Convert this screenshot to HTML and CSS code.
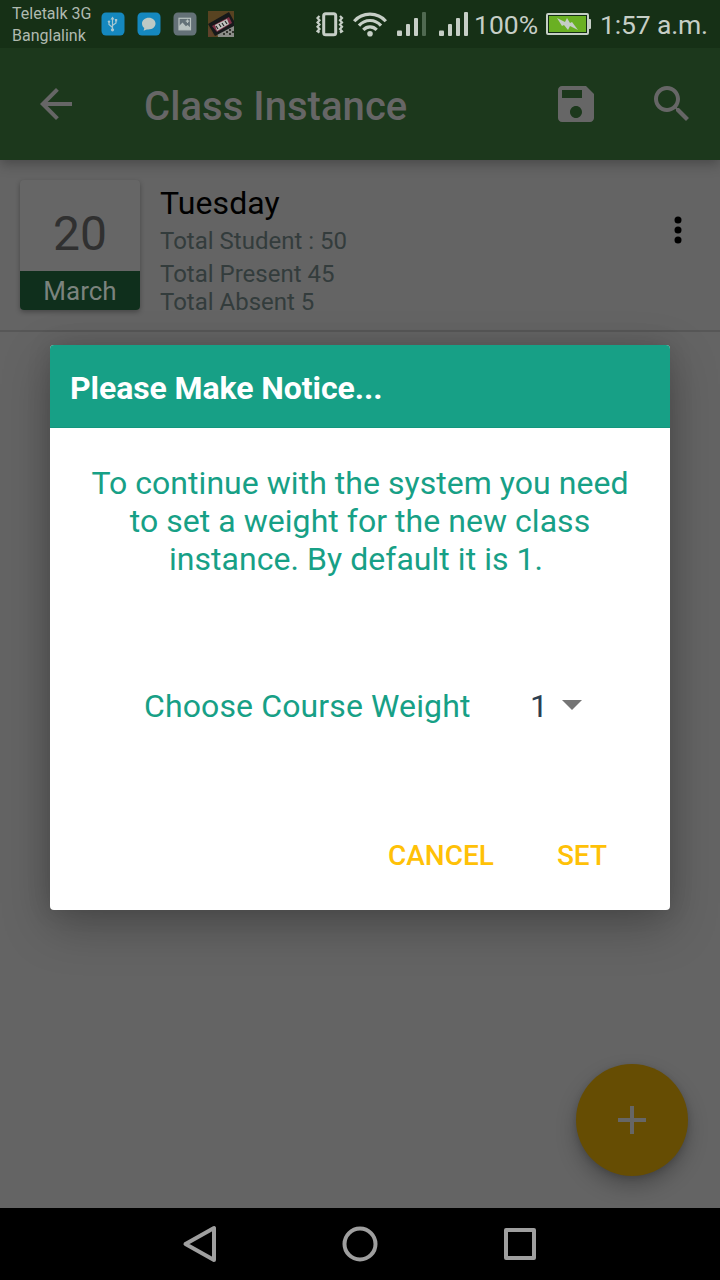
FILE: index.html
```html
<!DOCTYPE html>
<html lang="en">
<head>
<meta charset="utf-8">
<title>Class Instance</title>
<link rel="stylesheet" href="styles.css">
</head>
<body>
<div class="screen">
  <header class="top">
    <div class="status">
      <div class="carriers"><span>Teletalk 3G</span><span>Banglalink</span></div>
      <div class="notifications">
        <svg class="note" width="24" height="24" viewBox="0 0 24 24"><rect x=".5" y=".5" width="23" height="23" rx="4.5" fill="#1588bf"/><g fill="none" stroke="#a9c8d2" stroke-width="1.2"><path d="M11.5 18V6.5M11.5 15.5L8 12.5V10M11.5 13.5L15 11V8.5"/></g><path d="M11.5 4.5l2 3h-4z" fill="#a9c8d2"/><g fill="#a9c8d2"><circle cx="11.5" cy="17.8" r="1.6"/><circle cx="8" cy="9.6" r="1.2"/><path d="M14 7h2.2v2.4H14z"/></g></svg>
        <svg class="note" width="24" height="24" viewBox="0 0 24 24"><rect x=".5" y=".5" width="23" height="23" rx="4.5" fill="#1588bf"/><path d="M11.800 5.800C8 5.800 5 8.200 5 11.600c0 2 1 3.600 2.300 4.500l-.7 2.600 3.200-1.300c5.500.6 8.700-2.200 8.700-5.800C18.500 8.200 15.500 5.800 11.800 5.800z" fill="#bdc9c5"/></svg>
        <svg class="note" width="24" height="24" viewBox="0 0 24 24"><rect x=".5" y=".5" width="23" height="23" rx="4.500" fill="#647177"/><rect x="6" y="6.300" width="11.500" height="11.500" fill="none" stroke="#b9c2c0" stroke-width="1.200"/><path d="M6 14l3.500-3.600 3.400 3.800 1.700-1.200 3 2.800v2H6z" fill="#b9c2c0"/><path d="M14.500 7.500v3.400M12.800 9.200h3.400" stroke="#b9c2c0" stroke-width="1.200"/></svg>
        <svg width="26" height="26" viewBox="0 0 26 26"><path fill="#584321" d="M0 0h26v26H0z"/><path fill="#8b8d88" d="M9 21l17-9v14H10z"/><path fill="#17191b" d="M0 13L21 1l5 9v5L7 25z"/><path fill="#7e3045" d="M4 15l17-9 3 6-15 9z"/><path fill="#c0c1bd" d="M7 14l12-6 2 5-12 7z"/><path d="M8 15l2 3M11 13l2 3M14 12l2 3M17 10l2 3" stroke="#222" stroke-width="1.200"/><path fill="#17191b" d="M3 12l16-9 2 2-16 9z"/><path d="M15 22h2v2h-2zM18 20h2v2h-2zM21 22h2v2h-2zM21 18h2v2h-2zM24 20h2v2h-2z" fill="#33352f"/><path fill="#60412b" d="M0 16l6 9-6 1z"/></svg>
      </div>
      <div class="system">
        <svg class="vibrate" width="28" height="26" viewBox="0 0 28 26"><rect x="7.700" y="1.700" width="12" height="21" rx="2" fill="none" stroke="#c6cec6" stroke-width="3"/><path d="M3.500 4L1.500 6l2 2.200-2 2.200 2 2.200-2 2.200 2 2.200-2 2.200 2 1.300M24 4l2 2-2 2.200 2 2.200-2 2.200 2 2.200-2 2.200 2 2.200-2 1.300" fill="none" stroke="#c6cec6" stroke-width="2.200"/></svg>
        <svg class="wifi" width="34" height="26" viewBox="0 0 34 26"><g fill="none" stroke="#c6cec6" stroke-width="3.200"><path d="M1.200 9.200C9.500-.2 24.500-.2 32.800 9.200"/><path d="M6 13.600c6-6.800 16-6.800 22 0"/><path d="M10.300 17.800c3.800-4 9.600-4 13.400 0"/></g><circle cx="17" cy="21.800" r="2.800" fill="#c6cec6"/></svg>
        <svg class="sim" width="30" height="24" viewBox="0 0 30 24"><g fill="#c6cec6"><rect y="18.500" width="5" height="5.500" rx="1"/><rect x="9" y="12" width="4" height="12" rx="1"/><rect x="17" y="6" width="4" height="18" rx="1"/></g><rect x="25" width="4" height="24" rx="1" fill="#506951"/></svg>
        <svg class="sim2" width="30" height="24" viewBox="0 0 30 24"><g fill="#c6cec6"><rect y="18.500" width="5" height="5.500" rx="1"/><rect x="9" y="12" width="4" height="12" rx="1"/><rect x="17" y="6" width="4" height="18" rx="1"/><rect x="25" width="4" height="24" rx="1"/></g></svg>
        <span class="percent">100%</span>
        <svg class="battery" width="45" height="22" viewBox="0 0 45 22"><rect x="1" y="1" width="41" height="20" rx="1" fill="#132c14" stroke="#c6cec6" stroke-width="2"/><rect x="3" y="3" width="37" height="16" fill="#6ab023"/><path d="M43 6h1a1 1 0 0 1 1 1v8a1 1 0 0 1-1 1h-1z" fill="#c6cec6"/><path d="M11 5l8 4 2-4 3 5 2-1 6 8-8-4-2 4-4-5-2 1z" fill="#c6cec6"/><rect x="2.500" y="2.500" width="38" height="17" fill="none" stroke="#132c14"/></svg>
        <span class="clock">1:57 a.m.</span>
      </div>
    </div>
    <div class="toolbar">
      <svg class="back" width="48" height="48" viewBox="0 0 24 24"><path fill="#666" d="M20 11H7.830l5.590-5.590L12 4l-8 8 8 8 1.410-1.410L7.830 13H20v-2z"/></svg>
      <h1 class="page-title">Class Instance</h1>
      <svg class="save" width="48" height="48" viewBox="0 0 24 24"><path fill="#666" d="M17 3H5c-1.110 0-2 .9-2 2v14c0 1.100.89 2 2 2h14c1.100 0 2-.9 2-2V7l-4-4zm-5 16c-1.660 0-3-1.340-3-3s1.340-3 3-3 3 1.340 3 3-1.340 3-3 3zm3-10H5V5h10v4z"/></svg>
      <svg class="search" width="48" height="48" viewBox="0 0 24 24"><path fill="#666" d="M15.500 14h-.79l-.28-.27C15.410 12.590 16 11.110 16 9.500 16 5.910 13.090 3 9.500 3S3 5.910 3 9.500 5.910 16 9.500 16c1.610 0 3.090-.59 4.230-1.570l.27.28v.79l5 4.990L20.490 19l-4.990-5zm-6 0C7.010 14 5 11.990 5 9.500S7.010 5 9.500 5 14 7.010 14 9.500 11.990 14 9.500 14z"/></svg>
    </div>
  </header>

  <main class="content">
    <article class="entry">
      <div class="date">
        <span class="day">20</span>
        <span class="month">March</span>
      </div>
      <div class="details">
        <h2 class="weekday">Tuesday</h2>
        <p class="stat students">Total Student : 50</p>
        <p class="stat present">Total Present 45</p>
        <p class="stat">Total Absent 5</p>
      </div>
      <svg class="more" width="8" height="28" viewBox="0 0 8 28"><circle cx="4" cy="4" r="3.500"/><circle cx="4" cy="14" r="3.500"/><circle cx="4" cy="24" r="3.500"/></svg>
    </article>
  </main>

  <button class="fab"><svg width="28" height="28" viewBox="0 0 28 28"><path d="M14 0v28M0 14h28" stroke="#666" stroke-width="4"/></svg></button>

  <section class="dialog">
    <h2 class="dialog-title">Please Make Notice...</h2>
    <p class="message">To continue with the system you need<br>to set a weight for the new class<br>instance. By default it is 1.&nbsp;</p>
    <div class="weight">
      <span class="label">Choose Course Weight</span>
      <span class="value">1</span>
      <svg class="caret" width="20" height="10" viewBox="0 0 20 10"><path d="M0 0h20L10 10z" fill="#757575"/></svg>
    </div>
    <div class="actions"><button>CANCEL</button><button>SET</button></div>
  </section>

  <nav class="navbar">
    <svg width="40" height="40" viewBox="0 0 40 40"><path d="M34 4v32L5.500 20z"/></svg>
    <svg width="40" height="40" viewBox="0 0 40 40"><circle cx="20" cy="20" r="15.500"/></svg>
    <svg width="40" height="40" viewBox="0 0 40 40"><rect x="6" y="6" width="28" height="28"/></svg>
  </nav>
</div>
</body>
</html>
```
FILE: styles.css
```css
* { box-sizing: border-box; margin: 0; padding: 0; }
body { font-family: Roboto, sans-serif; }
svg { display: block; flex: none; }
button { border: 0; background: none; font: inherit; color: inherit; }
span, h1, h2, p { white-space: nowrap; }

.screen {
  position: relative;
  display: flex;
  flex-direction: column;
  width: 720px;
  height: 1280px;
  overflow: hidden;
  background: #646464;
}

.top { position: relative; box-shadow: 0 4px 12px rgba(0, 0, 0, .28); }

.status {
  display: flex;
  justify-content: space-between;
  height: 48px;
  padding-left: 12px;
  background: #163016;
  color: #c6cec6;
}
.carriers {
  display: flex;
  flex-direction: column;
  width: 89px;
  padding-top: 3px;
  font-size: 16px;
  line-height: 22px;
  color: #b0bab0;
}
.notifications { display: flex; gap: 12px; padding-top: 11px; }
.note { margin-top: 1px; }
.note:nth-child(3) { margin-right: -1px; }
.system { display: flex; width: 404px; margin-left: auto; }
.vibrate { margin-top: 12px; }
.wifi { margin: 12px 0 0 9px; }
.sim { margin: 12px 0 0 10px; }
.sim2 { margin: 12px 0 0 12px; }
.percent, .clock { font-size: 26.5px; line-height: 32px; padding-top: 9px; }
.percent { width: 65px; margin-left: 5px; }
.battery { margin: 13px 0 0 7px; }
.clock { margin-left: 9px; letter-spacing: -.15px; }

.toolbar {
  display: flex;
  height: 112px;
  padding: 32px 0 0 32px;
  background: #1c381c;
}
.page-title {
  width: 262px;
  margin-left: 64px;
  padding-top: 3px;
  font-size: 40px;
  font-weight: 500;
  line-height: 48px;
  letter-spacing: .05px;
  color: #666;
}
.save { margin-left: 146px; }
.search { margin-left: 48px; }

.content { flex: 1; }
.entry {
  display: flex;
  height: 172px;
  padding: 20px 0 0 20px;
  border-bottom: 2px solid #575757;
}
.date {
  display: flex;
  flex-direction: column;
  width: 120px;
  height: 130px;
  overflow: hidden;
  border-radius: 4px;
  background: #666;
  box-shadow: 0 2px 5px rgba(0, 0, 0, .3);
  text-align: center;
}
.day { height: 91px; padding-top: 26px; font-size: 48px; line-height: 56px; color: #303030; }
.month { height: 39px; padding-top: 1px; background: #0f2f1c; font-size: 26px; line-height: 39px; color: #7b837e; }
.details { width: 507px; margin-left: 20px; padding-top: 4px; }
.weekday { font-size: 32px; font-weight: 400; line-height: 38px; letter-spacing: .1px; color: #000; }
.stat { font-size: 24px; line-height: 28px; color: #333c3c; }
.students { margin: 5px 0; }
.more { margin: 36px 0 0 7px; }

.fab {
  position: absolute;
  top: 1064px;
  left: 576px;
  display: grid;
  place-items: center;
  width: 112px;
  height: 112px;
  border-radius: 50%;
  background: #664d03;
  box-shadow: 0 10px 20px rgba(0, 0, 0, .25), 0 2px 6px rgba(0, 0, 0, .15);
}

.dialog {
  position: absolute;
  top: 345px;
  left: 50px;
  width: 620px;
  height: 565px;
  border-radius: 4px;
  background: #fff;
  box-shadow: 0 16px 48px rgba(0, 0, 0, .26), 0 0 24px rgba(0, 0, 0, .12);
}
.dialog-title {
  height: 83px;
  padding: 3px 20px 0;
  border-bottom: 1px solid #14967e;
  border-radius: 4px 4px 0 0;
  background: #17a086;
  font-size: 32px;
  font-weight: 700;
  line-height: 80px;
  letter-spacing: -.08px;
  color: #fff;
}
.message {
  padding-top: 36px;
  text-align: center;
  font-size: 32px;
  line-height: 38px;
  letter-spacing: .04px;
  color: #17a086;
}
.weight {
  display: flex;
  padding: 109px 0 0 94px;
  font-size: 32px;
  line-height: 38px;
}
.label { width: 386px; letter-spacing: .12px; color: #17a086; }
.value { width: 32px; color: #2c3e50; }
.caret { margin-top: 13px; }
.actions {
  display: flex;
  justify-content: flex-end;
  gap: 63px;
  padding: 115px 63px 0 0;
  color: #ffc107;
  font-size: 28px;
  font-weight: 500;
  line-height: 32px;
}

.navbar {
  display: flex;
  justify-content: center;
  gap: 120px;
  height: 72px;
  padding-top: 16px;
  background: #000;
}
.navbar svg { fill: none; stroke: #9f9f9f; stroke-width: 4; stroke-linejoin: round; }
```
